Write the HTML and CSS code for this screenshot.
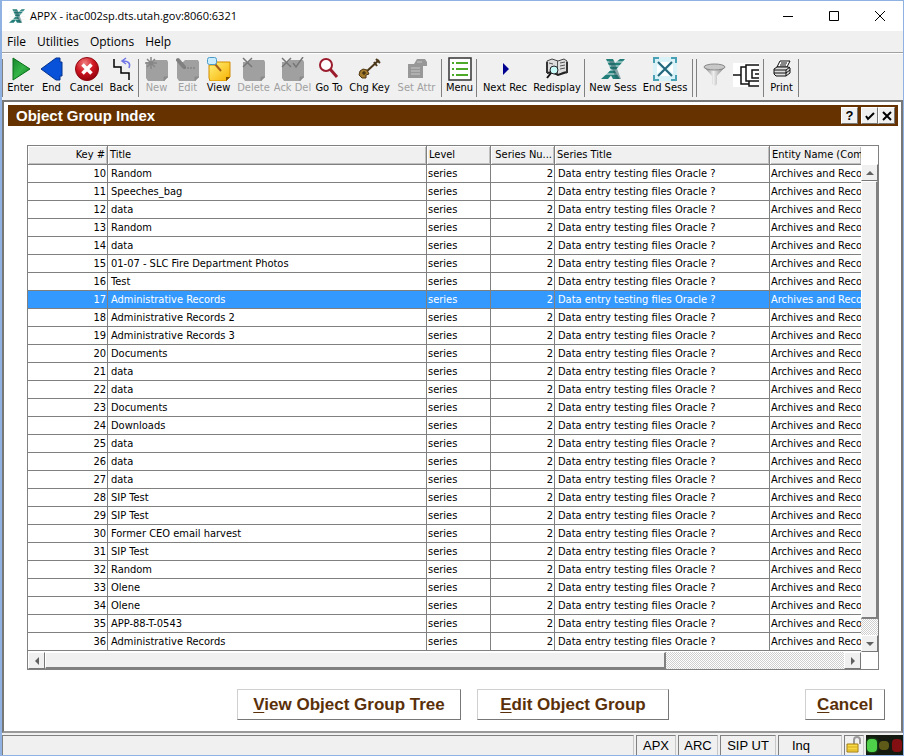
FILE: index.html
```html
<!DOCTYPE html>
<html lang="en">
<head>
<meta charset="utf-8">
<title>APPX - itac002sp.dts.utah.gov:8060:6321</title>
<link rel="stylesheet" href="styles.css">
</head>
<body>
<svg width="0" height="0" class="defs" aria-hidden="true">
  <defs>
    <linearGradient id="green" x1="0" y1="0" x2="1" y2="1"><stop offset="0" stop-color="#16852a"/><stop offset=".5" stop-color="#35b447"/><stop offset="1" stop-color="#0d7a20"/></linearGradient>
    <radialGradient id="red" cx=".4" cy=".25" r=".8"><stop offset="0" stop-color="#f08080"/><stop offset=".5" stop-color="#d01722"/><stop offset="1" stop-color="#8c0008"/></radialGradient>
    <linearGradient id="gold" x1="0" y1="0" x2="1" y2="1"><stop offset="0" stop-color="#fff27a"/><stop offset="1" stop-color="#f7b000"/></linearGradient>
    <linearGradient id="steel"><stop offset="0" stop-color="#777"/><stop offset=".45" stop-color="#eee"/><stop offset="1" stop-color="#777"/></linearGradient>
    <g id="note"><path d="M1 5h6l2-2h13l1 2v15l-4 4H3l-2-3z" fill="#a0a0a0"/><path d="M19 24v-4h4" fill="#8a8a8a" stroke="#8a8a8a"/></g>
    <g id="logo"><path d="M5 2h7l2 4 5-4h5L7 22H0L10 13z" fill="#237f79"/><path d="M12 11l7 11h-7l-4-7z" fill="#237f79"/><path d="M0 5h24M0 9h24M0 13h24M0 17h24" stroke="#eef3f3" stroke-width="1"/><path d="M8 4h5l7 18h-5z" fill="#245c5f" opacity=".5"/></g>
  </defs>
</svg>
<div class="window">
  <header class="titlebar">
    <svg class="app-icon" viewBox="0 0 24 24"><use href="#logo"/></svg>
    <span class="app-title">APPX - itac002sp.dts.utah.gov:8060:6321</span>
    <button class="caption" aria-label="Minimize"><svg viewBox="0 0 12 12"><path d="M1 6.500h10"/></svg></button>
    <button class="caption" aria-label="Maximize"><svg viewBox="0 0 12 12"><path d="M1.500 1.500h9v9h-9z"/></svg></button>
    <button class="caption" aria-label="Close"><svg viewBox="0 0 12 12"><path d="M1 1l10 10M11 1L1 11"/></svg></button>
  </header>
  <nav class="menubar"><button>File</button><button>Utilities</button><button>Options</button><button>Help</button></nav>
  <div class="toolbar">
    <span class="sep first"></span>
    <button class="tool"><svg viewBox="0 0 24 24"><path d="M4 1l17 11L4 23z" fill="url(#green)" stroke="#087018"/></svg>Enter</button>
    <button class="tool"><svg viewBox="0 0 24 24"><path d="M1 12L16 1h4v4h2v14h-2v4h-4z" fill="#0752d8" stroke="#04328e"/></svg>End</button>
    <button class="tool w40"><svg viewBox="0 0 24 24"><circle cx="12" cy="12" r="11.500" fill="url(#red)" stroke="#900b12"/><path d="M7.500 7.500l9 9m0-9l-9 9" stroke="#fff" stroke-width="3.500"/></svg>Cancel</button>
    <button class="tool"><svg viewBox="0 0 24 24"><path d="M4 2v8h7v6h8v7" fill="none" stroke="#000" stroke-width="1.500"/><path d="M19 11c2-5-1-7-6-7m3-3l-4 3 4 3" fill="none" stroke="#7176e8" stroke-width="1.500"/></svg>Back</button>
    <span class="sep"></span>
    <button class="tool" disabled><svg viewBox="0 0 24 24"><use href="#note"/><path d="M6 0v12M0 6h12M2 2l8 8m0-8l-8 8" stroke="#868686" stroke-width="1.500"/></svg>New</button>
    <button class="tool" disabled><svg viewBox="0 0 24 24"><use href="#note"/><path d="M2 3l6 7" stroke="#808080" stroke-width="4" stroke-linecap="round"/><path d="M8 11h11" stroke="#777" stroke-dasharray="2 1"/></svg>Edit</button>
    <button class="tool"><svg viewBox="0 0 24 24"><path d="M2 8h6l2-3h13v15l-4 4H3l-1-3z" fill="url(#gold)" stroke="#d28b00"/><path d="M19 24v-4h4z" fill="#7d5000"/><path d="M8 7l6 7" stroke="#a35d18" stroke-width="2"/><rect x=".5" y=".5" width="9" height="7" rx="2" fill="#c9edff" stroke="#4a9ac8"/></svg>View</button>
    <button class="tool w40" disabled><svg viewBox="0 0 24 24"><use href="#note"/><path d="M1 1l9 9m0-9l-9 9" stroke="#777" stroke-width="1.500"/></svg>Delete</button>
    <button class="tool w40" disabled><svg viewBox="0 0 24 24"><use href="#note"/><path d="M1 1l9 9m0-9l-9 9M12 6l3 4 7-10" fill="none" stroke="#777" stroke-width="1.500"/></svg>Ack Del</button>
    <button class="tool w34"><svg viewBox="0 0 24 24"><circle cx="9" cy="8" r="6" fill="#fff" stroke="#9b1c2c" stroke-width="2"/><path d="M13 12l7 8" stroke="#9b1c2c" stroke-width="3"/></svg>Go To</button>
    <button class="tool w46"><svg viewBox="0 0 24 24"><path d="M8 15L21 3m-3-1l4 4m-6-1l3 4" fill="none" stroke="#4b3718" stroke-width="2"/><path d="M5 12l4 1 2 4-3 1v3H4l-3-3 1-4z" fill="#a47a2b" stroke="#503812"/><path d="M4 16h4M6 14v4" stroke="#2d210c"/></svg>Chg Key</button>
    <button class="tool w46" disabled><svg viewBox="0 0 24 24"><path d="M3 7h6l3-5h8l2 3v4h-4v12H3z" fill="#989898"/><path d="M6 11h9M6 14h9M6 17h9M12 5h5" stroke="#c8c8c8"/></svg>Set Attr</button>
    <span class="sep"></span>
    <button class="tool"><svg viewBox="0 0 24 24"><path d="M1 1h22v22H1z" fill="#fff" stroke="#333" stroke-width="1.500"/><path d="M4 6h2m2 0h12M4 12h2m2 0h12M4 18h2m2 0h12" stroke="#4caa28" stroke-width="2"/></svg>Menu</button>
    <span class="sep"></span>
    <button class="tool w52"><svg viewBox="0 0 24 24"><path d="M10 6l6 6-6 6z" fill="#000090"/></svg>Next Rec</button>
    <button class="tool w52"><svg viewBox="0 0 24 24"><path d="M2 4l5-2 6 2 6-2 3 2v12l-3-1-6 3-6-3-5 1z" fill="#ddd" stroke="#444"/><path d="M12.500 4v13M15 6l5-1m-5 4l5-1m-5 4l5-1M4 6l4 1" stroke="#555"/><path d="M2 16l5-1 6 3 9-3" stroke="#222" stroke-width="2" fill="none"/><path d="M2 5v11M22 5v11" stroke="#333" stroke-width="2"/><circle cx="9" cy="13" r="4" fill="#c9fafa" stroke="#222"/><path d="M6 16l-4 5" stroke="#111" stroke-width="2"/></svg>Redisplay</button>
    <span class="sep"></span>
    <button class="tool w52"><svg viewBox="0 0 24 24"><use href="#logo"/></svg>New Sess</button>
    <button class="tool w52"><svg viewBox="0 0 24 24"><path d="M0 0h24v24H0z" fill="#d9f2f7"/><path d="M7 5h10l-5 5zM7 19h10l-5-5zM4 7v10l5-5zM20 7v10l-5-5z" fill="#fff"/><path d="M5 5l14 14m0-14L5 19" stroke="#21657a" stroke-width="2"/><path d="M1 6V1h5M18 1h5v5M1 18v5h5M18 23h5v-5" fill="none" stroke="#48a1b5" stroke-width="2"/></svg>End Sess</button>
    <span class="sep"></span><span class="sep"></span>
    <button class="tool bare" aria-label="Filter"><svg viewBox="0 0 24 24"><path d="M1 4l8 9v8l3 2 2-2v-8l8-9z" fill="url(#steel)"/><ellipse cx="11.500" cy="4" rx="10.500" ry="3" fill="#c8c8c8" stroke="#888"/></svg></button>
    <button class="tool bare wide" aria-label="Tree"><svg viewBox="0 0 26 24"><path d="M0 0h26v24H0z" fill="#fff"/><path d="M0 12h8M26 2H13v4M13 4H8v17h8M26 23H16v-5M13 6v12h13M26 7h-7v8h7M26 11h-4" fill="none" stroke="#111" stroke-width="1.500"/></svg></button>
    <span class="sep"></span>
    <button class="tool"><svg viewBox="0 0 24 24"><path d="M7 10l3-6h10l-3 6z" fill="#fff" stroke="#111"/><path d="M11 6h6m-7 2h6" stroke="#111"/><path d="M4 12l3-2h11l2 1v5l-4 3H6l-2-2z" fill="#ddd" stroke="#111"/><path d="M4 13h12l4-3M4 16h12l4-3M16 13v6" fill="none" stroke="#111"/></svg>Print</button>
    <span class="sep"></span>
  </div>
  <main class="panel">
    <div class="panel-title">
      <h1>Object Group Index</h1>
      <button class="mini" aria-label="Help">?</button>
      <button class="mini gap" aria-label="Accept"><svg viewBox="0 0 12 12"><path d="M2 6l2 3 6-6"/></svg></button>
      <button class="mini" aria-label="Close panel"><svg viewBox="0 0 12 12"><path d="M2 2l8 8m0-8L2 10"/></svg></button>
    </div>
    <section class="grid-box">
      <div class="grid-view">
        <table>
          <colgroup><col class="c-key"><col class="c-title"><col class="c-level"><col class="c-num"><col class="c-series"><col></colgroup>
          <thead><tr><th class="num">Key #</th><th>Title</th><th>Level</th><th class="num">Series Nu...</th><th>Series Title</th><th>Entity Name (Com</th></tr></thead>
          <tbody id="rows"></tbody>
        </table>
      </div>
      <div class="vbar"><span class="corner"></span><button class="arrow" aria-label="Scroll up"><i class="up"></i></button><span class="vthumb"></span><span class="vtrack"></span><button class="arrow" aria-label="Scroll down"><i class="down"></i></button></div>
      <div class="hbar"><button class="arrow" aria-label="Scroll left"><i class="left"></i></button><span class="hthumb"></span><span class="htrack"></span><button class="arrow" aria-label="Scroll right"><i class="right"></i></button></div>
    </section>
    <div class="actions">
      <button class="big view"><u>V</u>iew Object Group Tree</button>
      <button class="big edit"><u>E</u>dit Object Group</button>
      <button class="big cancel"><u>C</u>ancel</button>
    </div>
  </main>
  <footer class="status">
    <span class="cell fill"></span><span class="cell s40">APX</span><span class="cell s40">ARC</span><span class="cell s56">SIP UT</span><span class="cell s64">Inq</span>
    <span class="cell lock"><svg viewBox="0 0 18 18"><path d="M9 9V4q0-3 3-3t3 3v4" fill="none" stroke="#999" stroke-width="2"/><path d="M2 8h11v8H2z" fill="#f7da45" stroke="#a27b10"/><path d="M3 11h9m-9 3h9" stroke="#d5a91f"/></svg></span>
    <span class="lights"><i class="g"></i><i class="y"></i><i class="r"></i></span>
  </footer>
</div>
<script src="rows.js"></script>
</body>
</html>
```
FILE: styles.css
```css
* { box-sizing: border-box; }
body { margin: 0; background: #f0f0f0; color: #000; font: 11px/14px "DejaVu Sans Condensed", "Liberation Sans", sans-serif; }
button { font: inherit; color: inherit; background: none; border: 0; padding: 0; margin: 0; }
.defs { position: absolute; }
.window { min-height: 100vh; display: flex; flex-direction: column; border: 1px solid #8fb2e3; border-left-width: 2px; background: #f0f0f0; }

.titlebar { height: 30px; background: #fff; display: flex; align-items: center; padding-left: 7px; font: 11px/16px "Open Sans", sans-serif; }
.app-icon { width: 16px; height: 16px; margin-right: 5px; }
.app-title { flex: 1; }
.caption { width: 46px; height: 30px; display: grid; place-items: center; }
.caption svg { width: 12px; height: 12px; fill: none; stroke: #000; stroke-width: 1; }

.menubar { height: 22px; border-bottom: 1px solid #a0a0a0; display: flex; align-items: center; gap: 11px; padding-left: 5px; font: 12px/16px "Open Sans", sans-serif; }

.toolbar { height: 47px; display: flex; align-items: flex-start; padding-top: 3px; border-top: 1px solid #fff; overflow: hidden; white-space: nowrap; }
.tool { width: 31px; flex: none; display: flex; flex-direction: column; align-items: center; line-height: 14px; }
.tool svg { width: 24px; height: 24px; }
.tool:disabled { color: #a0a0a0; }
.w34 { width: 34px; }
.w40 { width: 39px; }
.w46 { width: 47px; }
.w52 { width: 52px; }
.bare { margin-top: 6px; }
.wide { width: 32px; }
.wide svg { width: 26px; }
.sep { flex: none; width: 1px; height: 38px; margin: 2px 2px 0 1px; background: #808080; }
.sep.first { margin: 2px 2px 0 0; }

.panel { flex: 1; display: flex; flex-direction: column; background: #fff; border: 2px solid #777; border-bottom-color: #999; padding: 3px 3px 0 4px; }
.panel-title { height: 21px; background: #663300; display: flex; align-items: center; padding: 0 3px 0 8px; }
.panel-title h1 { flex: 1; margin: 0; color: #fff; font: bold 15px/20px "Liberation Sans", sans-serif; }
.mini { width: 17px; height: 17px; display: grid; place-items: center; background: #f0f0f0; border: 1px solid #fff; border-right-color: #777; border-bottom-color: #777; font: bold 13px/14px "Liberation Sans", sans-serif; }
.mini.gap { margin-left: 3px; }
.mini svg { width: 12px; height: 12px; fill: none; stroke: #000; stroke-width: 2; }

.grid-box { margin: 19px 19px 0; border: 1px solid #808080; display: grid; grid-template-columns: minmax(0, 1fr) 17px; grid-template-rows: auto 17px; }
.grid-view { overflow: hidden; padding-bottom: 1px; }
table { width: 100%; table-layout: fixed; border-collapse: separate; border-spacing: 0; }
.c-key { width: 80px; }
.c-title { width: 319px; }
.c-level, .c-num { width: 64px; }
.c-series { width: 215px; }
th, td { height: 18px; padding: 0 1px; border-right: 1px solid #808080; border-bottom: 1px solid #808080; text-align: left; font-weight: normal; white-space: nowrap; overflow: hidden; line-height: 16px; }
th { height: 19px; padding: 0 2px; background: #f0f0f0; box-shadow: inset 1px 1px #fff, inset -1px -1px #c0c0c0; }
td:nth-child(2), td:nth-child(5) { padding-left: 3px; }
.num { text-align: right; }
th:last-child, td:last-child { border-right: 0; padding-right: 0; }
.selected td { background: #3399ff; color: #fff; }

.vbar { display: flex; flex-direction: column; }
.corner { height: 18px; background: #fff; }
.arrow { flex: none; width: 17px; height: 17px; display: grid; place-items: center; background: #f0f0f0; border: 1px solid #fff; border-right-color: #777; border-bottom-color: #777; }
.arrow i { border: 4px solid transparent; }
.arrow .up { border-top: 0; border-bottom-color: #606060; }
.arrow .down { border-bottom: 0; border-top-color: #606060; }
.arrow .left { border-left: 0; border-right-color: #606060; }
.arrow .right { border-right: 0; border-left-color: #606060; }
.vthumb, .hthumb { background: #f0f0f0; border: 1px solid #fff; border-right: 2px solid #808080; border-bottom: 2px solid #808080; }
.vthumb { flex: 436; }
.vtrack { flex: 16; }
.vtrack, .htrack { background: repeating-conic-gradient(#fff 0 25%, #cfcfcf 0 50%) 0 0 / 2px 2px; }
.hbar { display: flex; }
.hthumb { flex: 620; }
.htrack { flex: 179; }

.actions { display: flex; justify-content: flex-end; margin: 19px 13px 9px; }
.big { height: 31px; border: 1px solid #d0d0d0; border-right-color: #777; border-bottom-color: #777; background: #fff; color: #5a300a; font: bold 17px/20px "Liberation Sans", sans-serif; }
.big u { text-underline-offset: 2px; }
.view { width: 224px; }
.edit { width: 192px; margin: 0 136px 0 16px; }
.cancel { width: 80px; }

.status { height: 22px; display: flex; padding-top: 2px; gap: 2px; font: 13px/20px "Liberation Sans", sans-serif; }
.cell { flex: none; border: 1px solid #808080; border-right-color: #c8c8c8; border-bottom: 0; text-align: center; }
.fill { flex: 1; }
.s40 { width: 40px; }
.s56 { width: 56px; }
.s64 { width: 64px; padding-right: 18px; }
.lock { width: 20px; }
.lock svg { width: 18px; height: 18px; display: block; }
.lights { width: 37px; display: flex; align-items: center; justify-content: space-around; background: #141a10; }
.lights i { width: 10px; height: 13px; border-radius: 4px; }
.g { background: #4fd04a; box-shadow: 0 0 3px #1e8d20; }
.lights .y { height: 9px; background: #5e5a18; }
.r { background: #820f12; }
```
FILE: rows.js
```js
const titles = [
  [10, "Random"], [11, "Speeches_bag"], [12, "data"], [13, "Random"], [14, "data"],
  [15, "01-07 - SLC Fire Department Photos"], [16, "Test"], [17, "Administrative Records"],
  [18, "Administrative Records 2"], [19, "Administrative Records 3"], [20, "Documents"],
  [21, "data"], [22, "data"], [23, "Documents"], [24, "Downloads"], [25, "data"], [26, "data"],
  [27, "data"], [28, "SIP Test"], [29, "SIP Test"], [30, "Former CEO email harvest"],
  [31, "SIP Test"], [32, "Random"], [33, "Olene"], [34, "Olene"], [35, "APP-88-T-0543"],
  [36, "Administrative Records"]
];
document.getElementById("rows").innerHTML = titles.map(([key, title]) =>
  `<tr${key === 17 ? ' class="selected"' : ""}><td class="num">${key}</td><td>${title}</td><td>series</td><td class="num">2</td><td>Data entry testing files Oracle ?</td><td>Archives and Reco</td></tr>`
).join("");
```
